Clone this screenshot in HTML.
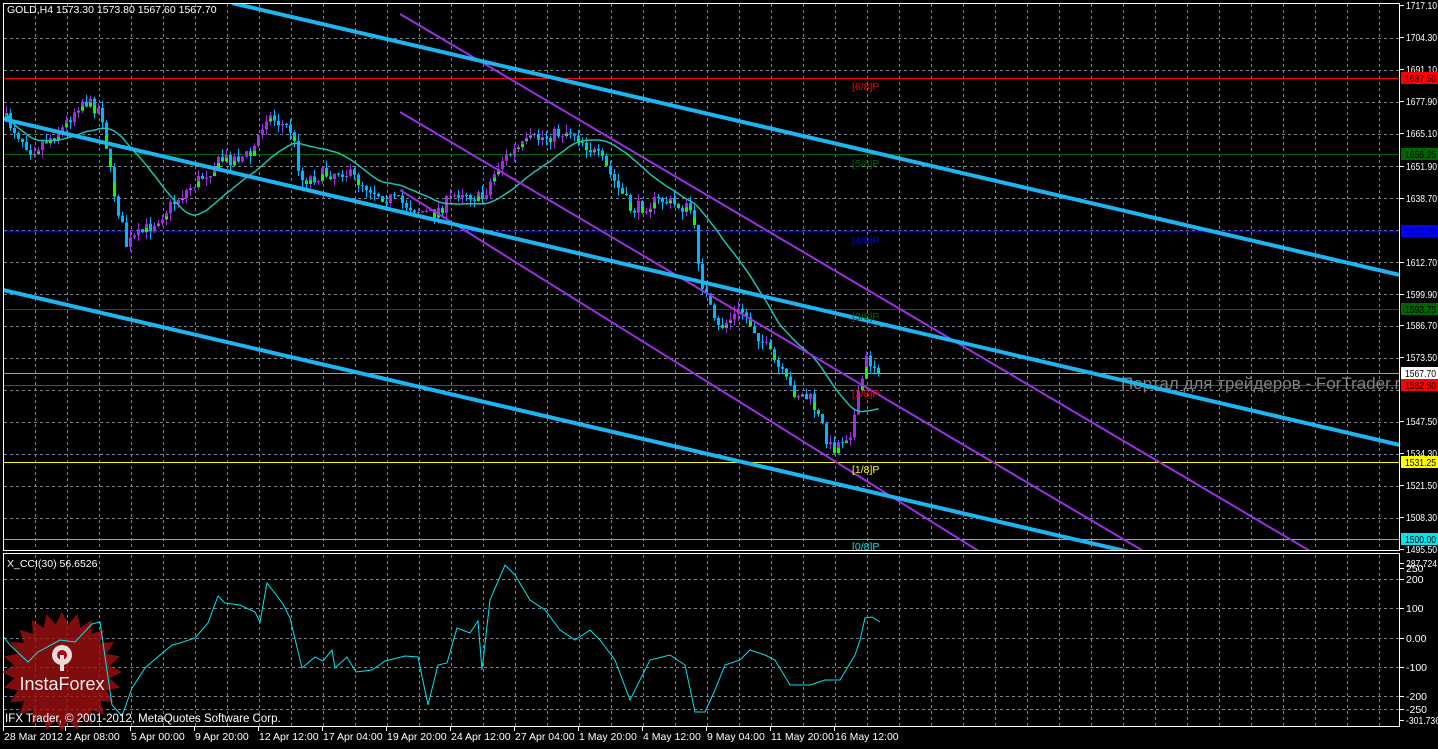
<!DOCTYPE html>
<html><head><meta charset="utf-8">
<style>
html,body{margin:0;padding:0;background:#000;}
body{width:1438px;height:744px;overflow:hidden;font-family:"Liberation Sans","DejaVu Sans",sans-serif;}
svg text{font-family:"Liberation Sans","DejaVu Sans",sans-serif;font-size:10.5px;}
</style></head><body>
<svg id="s" width="1438" height="744" viewBox="0 0 1438 744" xmlns="http://www.w3.org/2000/svg">
<rect width="1438" height="744" fill="#000"/>
<defs>
<clipPath id="main"><rect x="4" y="4" width="1396" height="546"/></clipPath>
<clipPath id="ind"><rect x="4" y="555" width="1396" height="171"/></clipPath>
</defs>
<g id="grid" stroke="#7a8590" stroke-width="1" stroke-dasharray="3,3"></g>
<g clip-path="url(#main)">
<line x1="4" y1="78.5" x2="1400" y2="78.5" stroke="#ff0000"/>
<line x1="4" y1="154.5" x2="1400" y2="154.5" stroke="#006400"/>
<line x1="4" y1="231.5" x2="1400" y2="231.5" stroke="#0000ff" stroke-width="1.5"/>
<line x1="4" y1="309.5" x2="1400" y2="309.5" stroke="#006400"/>
<line x1="4" y1="373.5" x2="1400" y2="373.5" stroke="#a0a0a0"/>
<line x1="4" y1="385.5" x2="1400" y2="385.5" stroke="#ff0000"/>
<line x1="4" y1="462.5" x2="1400" y2="462.5" stroke="#ffff00"/>
<line x1="4" y1="539.5" x2="1400" y2="539.5" stroke="#00e5ee"/>
<text x="1121" y="389" fill="#808080" style="font-size:17px">Портал для трейдеров - ForTrader.ru</text>
<g id="candles"></g>
<polyline id="ma" fill="none" stroke="#20c0b0" stroke-width="1.5"/>
<g stroke="#9a30e0" stroke-width="2">
<line x1="400" y1="14" x2="1310" y2="551"/>
<line x1="400" y1="112" x2="1150" y2="555"/>
<line x1="400" y1="190" x2="985" y2="555"/>
</g>
<g stroke="#1eb4f0" stroke-width="4">
<line x1="232" y1="3" x2="1400" y2="275"/>
<line x1="3" y1="119" x2="1400" y2="445"/>
<line x1="3" y1="290" x2="1400" y2="615"/>
</g>
<g style="font-size:10.5px">
<text x="852" y="90" fill="#ff0000">[6/8]P</text>
<text x="852" y="167" fill="#006400">[5/8]P</text>
<text x="852" y="244" fill="#0000ff">[4/8]P</text>
<text x="852" y="320" fill="#006400">[3/8]P</text>
<text x="852" y="397" fill="#ff0000">[2/8]P</text>
<text x="852" y="473" fill="#ffff00">[1/8]P</text>
<text x="852" y="550" fill="#00e5ee">[0/8]P</text>
</g>
</g>
<text x="7" y="13" fill="#fff">GOLD,H4  1573.30 1573.80 1567.60 1567.70</text>
<g stroke="#fff" fill="none">
<rect x="3.5" y="3.5" width="1396" height="547"/>
<rect x="3.5" y="553.5" width="1396" height="173"/>
</g>
<g transform="translate(62,672)">
<polygon id="star" fill="#a01010" fill-opacity="0.8"/>
<g fill="#fff" opacity="0.85">
<circle cx="0" cy="-17" r="10"/>
<circle cx="0" cy="-17" r="5" fill="#a01010"/>
<rect x="-2" y="-17" width="4" height="16"/>
</g>
<text x="0" y="18" text-anchor="middle" fill="#eee" style="font-size:18px">InstaForex</text>
</g>
<g clip-path="url(#ind)">
<polyline id="cci" fill="none" stroke="#00e5ee" stroke-width="1"/>
</g>
<text x="7" y="567" fill="#fff">X_CCI(30) 56.6526</text>
<text x="5" y="722" fill="#fff" style="font-size:11.5px">IFX Trader, © 2001-2012, MetaQuotes Software Corp.</text>
<g id="axis" fill="#fff"></g>
</svg>
<script>
(function(){
var NS="http://www.w3.org/2000/svg";
function el(t,a,p){var e=document.createElementNS(NS,t);for(var k in a)e.setAttribute(k,a[k]);(p||document.getElementById('s')).appendChild(e);return e;}
var grid=document.getElementById('grid');
for(var x=35;x<1400;x+=32){el('line',{x1:x+.5,y1:4,x2:x+.5,y2:550},grid);el('line',{x1:x+.5,y1:555,x2:x+.5,y2:726},grid);}
for(var y=38.5;y<550;y+=32)el('line',{x1:4,y1:y,x2:1400,y2:y},grid);
[579,608,638,667,696,709].forEach(function(y){el('line',{x1:4,y1:y+.5,x2:1400,y2:y+.5},grid);});
var kp=[[5,120],[30,150],[60,130],[80,100],[100,110],[110,180],[125,245],[150,225],[180,195],[220,160],[250,155],[265,115],[290,130],[300,180],[340,170],[380,195],[430,215],[460,190],[480,200],[500,160],[530,140],[570,130],[600,160],[630,210],[660,200],[690,210],[700,280],[715,330],[740,310],[760,340],[790,390],[810,400],[830,450],[850,430],[865,360],[880,370]];
function interp(x){for(var i=1;i<kp.length;i++){if(x<=kp[i][0]){var a=kp[i-1],b=kp[i];return a[1]+(b[1]-a[1])*(x-a[0])/(b[0]-a[0]);}}return kp[kp.length-1][1];}
var seed=7;function r(){seed=(seed*16807)%2147483647;return seed/2147483647;}
var cg=document.getElementById('candles'),prev=120,closes=[],xs=[];
for(var x=5;x<=880;x+=4){var c=interp(x)+(r()-.5)*14;var o=prev;var hi=Math.min(o,c)-r()*8,lo=Math.max(o,c)+r()*8;
var up=c<o;var col=up?'#9a30e0':'#00b4ff';
el('line',{x1:x+1.5,y1:hi,x2:x+1.5,y2:lo,stroke:col,'stroke-width':1},cg);
var bt=Math.min(o,c),h=Math.max(1,Math.abs(o-c));
el('rect',{x:x,y:bt,width:3,height:h,fill:col},cg);
if(r()<.5)el('rect',{x:x,y:bt+h*0.5,width:3,height:h*0.5,fill:'#00ff00'},cg);
prev=c;closes.push(c);xs.push(x+1.5);}
var pts=[];for(var i=0;i<closes.length;i++){var s=0,n=0;for(var j=Math.max(0,i-20);j<=i;j++){s+=closes[j];n++;}pts.push(xs[i]+','+(s/n).toFixed(1));}
document.getElementById('ma').setAttribute('points',pts.join(' '));
var cci=[[3,636],[10,645],[28,662],[38,652],[60,640],[75,642],[92,624],[100,622],[112,705],[122,716],[132,688],[145,668],[160,655],[172,645],[180,643],[195,638],[208,623],[218,596],[225,603],[240,605],[255,612],[260,622],[267,583],[283,604],[290,618],[302,668],[315,657],[323,661],[332,650],[335,668],[347,657],[356,672],[372,670],[385,661],[405,656],[418,657],[428,705],[438,665],[447,663],[457,628],[470,633],[478,621],[482,670],[490,600],[505,565],[515,575],[530,600],[545,610],[560,630],[575,640],[590,630],[600,640],[615,660],[630,700],[640,680],[650,660],[670,655],[685,665],[695,712],[705,712],[715,690],[725,665],[740,660],[750,650],[765,655],[775,660],[790,685],[810,685],[825,680],[840,680],[855,655],[860,640],[865,618],[872,617],[880,622]];
document.getElementById('cci').setAttribute('points',cci.map(function(p){return p.join(',')}).join(' '));
var sp=[];for(var k=0;k<48;k++){var a=k*Math.PI/24,rr=k%2?48:60;sp.push((Math.sin(a)*rr).toFixed(1)+','+(-Math.cos(a)*rr).toFixed(1));}
document.getElementById('star').setAttribute('points',sp.join(' '));
var ax=document.getElementById('axis');
var labs=[['1717.10',5],['1704.30',37],['1691.10',69],['1677.90',101],['1665.10',133],['1651.90',166],['1638.70',198],['1612.70',262],['1599.90',294],['1586.70',325],['1573.50',357],['1547.50',421],['1534.30',453],['1521.50',485],['1508.30',517],['1495.50',549],
['287.724',563],['250',568],['200',579],['100',608],['0.00',638],['-100',667],['-200',696],['-250',709],['-301.736',720]];
function txt(s,x,y,fill){var t=el('text',{x:x,y:y,fill:fill},ax);t.textContent=s;if(s.length>=7)t.setAttribute('textLength',s.length>7?34:31),t.setAttribute('lengthAdjust','spacingAndGlyphs');}
labs.forEach(function(l){el('line',{x1:1400,y1:l[1]+.5,x2:1404,y2:l[1]+.5,stroke:'#fff'},ax);txt(l[0],1406,l[1]+4,'#fff');});
var boxes=[['1687.50',78,'#ff0000','#000'],['1656.25',154,'#006400','#000'],['1625.00',231,'#0000ff','#00008b'],['1593.75',309,'#006400','#000'],['1567.70',373,'#ffffff','#000'],['1562.50',385,'#ff0000','#000'],['1531.25',462,'#ffff00','#000'],['1500.00',539,'#00e5ee','#000']];
boxes.forEach(function(b){el('rect',{x:1401,y:b[1]-6,width:37,height:12,fill:b[2]},ax);txt(b[0],1405,b[1]+4,b[3]);});
var dates=[['28 Mar 2012',3],['2 Apr 08:00',65],['5 Apr 00:00',130],['9 Apr 20:00',194],['12 Apr 12:00',258],['17 Apr 04:00',322],['19 Apr 20:00',386],['24 Apr 12:00',450],['27 Apr 04:00',514],['1 May 20:00',578],['4 May 12:00',642],['9 May 04:00',706],['11 May 20:00',770],['16 May 12:00',834]];
dates.forEach(function(d){el('line',{x1:d[1]+.5,y1:727,x2:d[1]+.5,y2:731,stroke:'#fff'},ax);var t=el('text',{x:d[1]+1,y:740,fill:'#fff'},ax);t.textContent=d[0];});
})();
</script>
</body></html>
